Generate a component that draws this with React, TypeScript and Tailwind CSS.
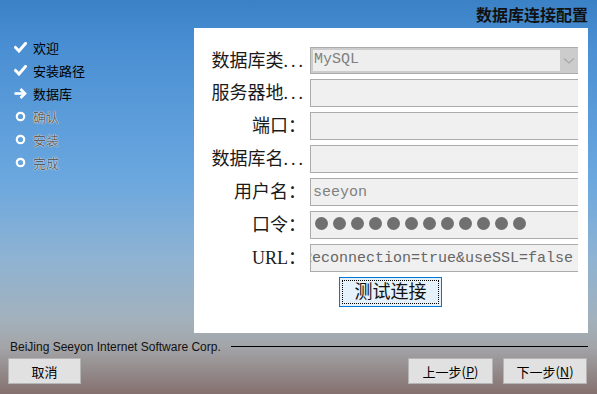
import React from "react";

const sans = { fontFamily: '"Noto Sans CJK SC", "Noto Sans", sans-serif' };
const serif = { fontFamily: '"Liberation Serif", "Noto Sans CJK SC", serif' };
const mono = { fontFamily: '"Liberation Mono", monospace' };

function Check() {
  return (
    <svg width="13" height="11" viewBox="0 0 13 11">
      <polyline points="1.5,5.5 5,9 11.5,1.5" fill="none" stroke="#fff" strokeWidth="3" strokeLinecap="square" />
    </svg>
  );
}
function Arrow() {
  return (
    <svg width="13" height="11" viewBox="0 0 13 11">
      <line x1="0.5" y1="5.5" x2="11" y2="5.5" stroke="#fff" strokeWidth="2.6" />
      <polyline points="6.5,1 11,5.5 6.5,10" fill="none" stroke="#fff" strokeWidth="2.6" />
    </svg>
  );
}
function Ring() {
  return (
    <svg width="13" height="11" viewBox="0 0 13 11">
      <circle cx="6.5" cy="5.5" r="3.7" fill="none" stroke="#fff" strokeWidth="2.2" />
    </svg>
  );
}

const steps: { t: string; icon: "c" | "a" | "r" }[] = [
  { t: "欢迎", icon: "c" },
  { t: "安装路径", icon: "c" },
  { t: "数据库", icon: "a" },
  { t: "确认", icon: "r" },
  { t: "安装", icon: "r" },
  { t: "完成", icon: "r" },
];

function Label({ text, dots }: { text: string; dots?: boolean }) {
  return (
    <div className="w-[112px] text-right text-[18px] text-[#1a1a1a] leading-none whitespace-nowrap" style={serif}>
      {text}
      {dots && <span className="tracking-[3px]">...</span>}
    </div>
  );
}

function Row({ label, dots, children }: { label: string; dots?: boolean; children?: React.ReactNode }) {
  return (
    <div className="flex h-[28px] items-center">
      <Label text={label} dots={dots} />
      <div className="ml-[4px] flex-1 h-full overflow-hidden">
        <div className="w-[320px] h-full border border-[#ababab] bg-[#f0f0f0] flex items-center overflow-hidden">
          {children}
        </div>
      </div>
    </div>
  );
}

export default function App() {
  return (
    <div
      className="w-[597px] h-[394px] overflow-hidden flex flex-col bg-[linear-gradient(to_bottom,#3a81c5_0%,#4a8fd3_12%,#6aa7df_45%,#8fb3d2_66%,#a2b1bc_81%,#a3a5a8_88%,#85716f_100%)]"
      style={sans}
    >
      <div className="h-[28px] flex items-center justify-end pr-[9px] text-[16px] font-bold text-[#111] leading-none">
        数据库连接配置
      </div>
      <div className="flex h-[305px]">
        <div className="w-[194px] pt-[8px] pl-[14px] flex flex-col">
          {steps.map((s) => (
            <div key={s.t} className="h-[23px] flex items-center">
              <div className="w-[13px] flex items-center justify-center">
                {s.icon === "c" ? <Check /> : s.icon === "a" ? <Arrow /> : <Ring />}
              </div>
              <span
                className={`ml-[6px] text-[13px] leading-none ${
                  s.icon === "r"
                    ? "text-[#5f5f5f] [text-shadow:0_0_1px_#fff,0_0_1px_#fff]"
                    : "text-black"
                }`}
              >
                {s.t}
              </span>
            </div>
          ))}
        </div>
        <div className="w-[394px] bg-white pt-[19px] pr-[10px] flex flex-col gap-[5px]">
          <div className="flex h-[27px] items-center">
            <Label text="数据库类" dots />
            <div className="ml-[4px] flex-1 h-full overflow-hidden">
              <div className="w-[320px] h-full border border-[#ababab] bg-[#cccccc] flex items-center">
                <div
                  className="ml-[2px] w-[247px] h-[21px] bg-[#eeeeee] flex items-center pl-[1px] text-[15px] text-[#808080]"
                  style={mono}
                >
                  MySQL
                </div>
                <svg width="18" height="10" viewBox="0 0 18 10">
                  <polyline points="4,2.5 9,7 14,2.5" fill="none" stroke="#a8a8a8" strokeWidth="1.2" />
                </svg>
              </div>
            </div>
          </div>
          <Row label="服务器地" dots />
          <Row label="端口：" />
          <Row label="数据库名" dots />
          <Row label="用户名：">
            <span className="pl-[2px] text-[15px] text-[#808080] leading-none" style={mono}>
              seeyon
            </span>
          </Row>
          <Row label="口令：">
            <div className="pl-[4px] flex gap-[5px] -mt-[3px]">
              {Array.from({ length: 12 }).map((_, i) => (
                <div key={i} className="w-[13px] h-[13px] rounded-full bg-[#707070]" />
              ))}
            </div>
          </Row>
          <Row label="URL：">
            <span className="-ml-[8px] text-[15px] text-[#666] leading-none whitespace-nowrap" style={mono}>
              Reconnection=true&amp;useSSL=false
            </span>
          </Row>
          <div className="pl-[145px]">
            <button className="w-[103px] h-[30px] border border-[#0078d7] bg-[#e5f1fb] p-[2px] flex" style={serif}>
              <div className="flex-1 border border-dotted border-black flex items-center justify-center text-[18px] text-[#111] leading-none">
                测试连接
              </div>
            </button>
          </div>
        </div>
      </div>
      <div className="flex-1 flex flex-col pt-[5px]">
        <div className="h-[17px] flex items-center pl-[10px]">
          <span
            className="text-[12px] text-[#111] leading-none whitespace-nowrap"
            style={{ fontFamily: '"Liberation Sans", sans-serif' }}
          >
            BeiJing Seeyon Internet Software Corp.
          </span>
          <div className="flex-1 h-px bg-black ml-[10px] mr-[9px]" />
        </div>
        <div className="mt-[3px] h-[26px] flex pl-[8px] pr-[10px]">
          <button className="w-[73px] h-[26px] border border-[#b5b5b5] bg-[#e1e1e1] text-[13px] text-black leading-none">
            取消
          </button>
          <div className="flex-1" />
          <button className="w-[85px] h-[26px] border border-[#b5b5b5] bg-[#e1e1e1] text-[13px] text-black leading-none">
            上一步(<span className="underline">P</span>)
          </button>
          <button className="ml-[10px] w-[84px] h-[26px] border border-[#b5b5b5] bg-[#e1e1e1] text-[13px] text-black leading-none">
            下一步(<span className="underline">N</span>)
          </button>
        </div>
      </div>
    </div>
  );
}
